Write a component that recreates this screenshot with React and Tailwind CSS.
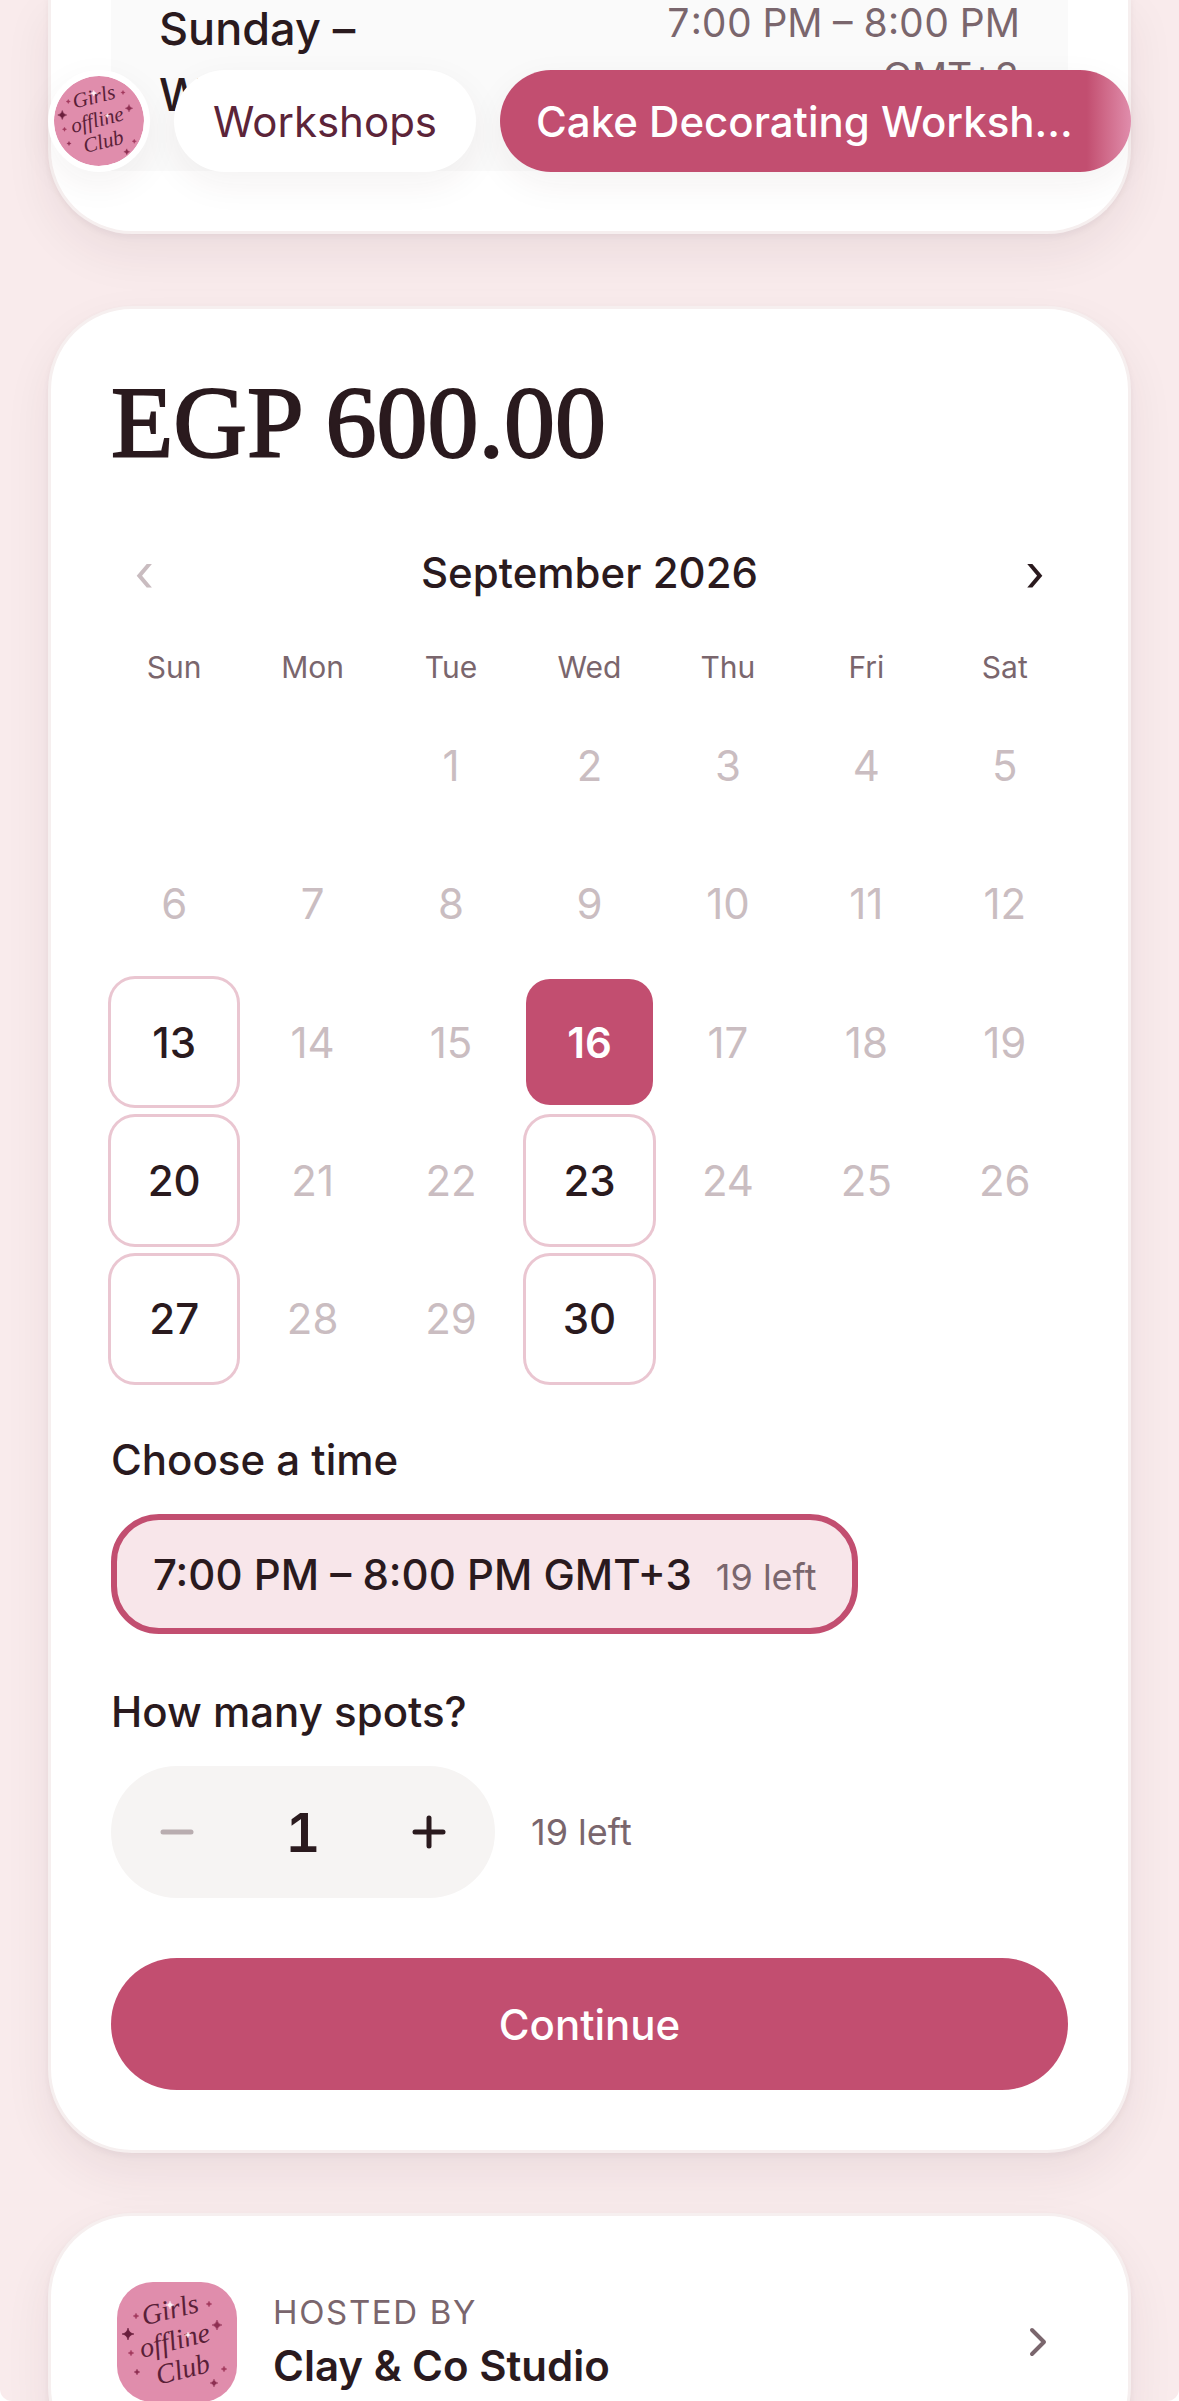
import React, { useState } from "react";
import { ChevronRight, Minus, Plus } from "lucide-react";

const WEEKDAYS = ["Sun", "Mon", "Tue", "Wed", "Thu", "Fri", "Sat"];
const OPEN_DAYS = [13, 16, 20, 23, 27, 30];
const LEADING_BLANKS = 2;
const CARD_SHADOW = "shadow-[0_3px_6px_rgba(60,25,40,0.05),0_20px_48px_rgba(60,25,40,0.07)]";

const SPARKLES = [
  [11, 52, 6, "#6a1e3c"],
  [100, 43, 5, "#8e2f52"],
  [92, 22, 3, "#a33a5e"],
  [97, 101, 4, "#8e2f52"],
  [19, 34, 3, "#a33a5e"],
  [14, 71, 3, "#a33a5e"],
  [20, 90, 3, "#8e2f52"],
  [107, 87, 3, "#a33a5e"],
  [53, 23, 4, "#fdeef4"],
  [71, 53, 3, "#fdeef4"],
];

function ClubLogo({ className }) {
  return (
    <svg viewBox="0 0 120 120" className={className} role="img" aria-label="Girls offline Club">
      <rect width="120" height="120" fill="#e08dac" />
      <g
        transform="rotate(-14 60 60)"
        fill="#5a1f38"
        fontFamily="'Liberation Serif', serif"
        fontStyle="italic"
        fontSize="28"
        textAnchor="middle"
      >
        <text x="61" y="36">Girls</text>
        <text x="58" y="67">offline</text>
        <text x="59" y="97">Club</text>
      </g>
      {SPARKLES.map(([x, y, r, color]) => (
        <path
          key={`${x}-${y}`}
          transform={`translate(${x} ${y}) scale(${r})`}
          d="M0-1Q.15-.15 1 0Q.15.15 0 1Q-.15.15-1 0Q-.15-.15 0-1Z"
          fill={color}
          stroke={color}
          strokeWidth="0.1"
        />
      ))}
    </svg>
  );
}

function TopNav() {
  return (
    <nav className="absolute inset-x-12 top-[70px] z-10 flex items-center gap-6">
      <a
        href="#home"
        className="size-[102px] shrink-0 overflow-hidden rounded-full border-6 border-white bg-white shadow-[0_12px_36px_rgba(60,40,30,0.06)]"
      >
        <ClubLogo className="size-full rounded-full" />
      </a>
      <a
        href="#workshops"
        className="flex h-[102px] shrink-0 items-center rounded-full bg-white px-[39px] text-[42px] text-[#5c2439] shadow-[0_12px_36px_rgba(60,40,30,0.06)]"
      >
        Workshops
      </a>
      <a
        href="#cake"
        aria-current="page"
        className="flex h-[102px] min-w-0 flex-1 items-center rounded-full bg-linear-to-r from-[#c24e70] from-93% to-[#e08dac] px-9 text-[42px] font-medium whitespace-nowrap text-white shadow-[0_12px_36px_rgba(60,40,30,0.06)]"
      >
        Cake Decorating Worksh…
      </a>
    </nav>
  );
}

function Calendar({ selected, onSelect }) {
  return (
    <section aria-label="Choose a date">
      <div className="mt-[63px] flex h-[66px] items-center justify-between">
        <button type="button" disabled aria-label="Previous month" className="size-[66px] text-[51px] leading-[66px] text-[#c9bcc0]">
          ‹
        </button>
        <h2 className="text-[42px] leading-[66px] font-medium">September 2026</h2>
        <button type="button" aria-label="Next month" className="size-[66px] text-[51px] leading-[66px]">
          ›
        </button>
      </div>
      <div className="mt-10 grid grid-cols-7 gap-3 text-center text-[30px] leading-[42px] text-[#7a666d]">
        {WEEKDAYS.map((day) => (
          <span key={day}>{day}</span>
        ))}
      </div>
      <div className="mt-3.5 grid grid-cols-7 gap-3 text-[42px]">
        {Array.from({ length: LEADING_BLANKS }, (_, i) => (
          <span key={`blank-${i}`} />
        ))}
        {Array.from({ length: 30 }, (_, i) => i + 1).map((day) => {
          const open = OPEN_DAYS.includes(day);
          const look = !open
            ? "text-[#cabdc1]"
            : day === selected
              ? "bg-[#c24e70] font-semibold text-white"
              : "font-medium ring-3 ring-[#eac6d1]";
          return (
            <button
              key={day}
              type="button"
              disabled={!open}
              aria-pressed={day === selected}
              onClick={() => onSelect(day)}
              className={`flex aspect-square items-center justify-center rounded-3xl ${look}`}
            >
              {day}
            </button>
          );
        })}
      </div>
    </section>
  );
}

export default function App() {
  const [selected, setSelected] = useState(16);
  const [spots, setSpots] = useState(1);

  return (
    <main className="relative h-screen overflow-hidden rounded-b-xl bg-[#f9ebec] font-['Inter',sans-serif] text-[#2a1a1e]">
      <TopNav />
      <div className="px-12">
        <section className={`rounded-b-[84px] border-3 border-t-0 border-[#f6efef] bg-white px-15 pb-15 ${CARD_SHADOW}`}>
          <div className="-mt-1 flex justify-between bg-[#fafafa] px-12 pb-[43px]">
            <p className="text-[45px] leading-[66px] font-medium">
              Sunday –<br />
              Wednesday
            </p>
            <p className="text-right text-[39px] leading-[54px] text-[#7a666d] tabular-nums">
              7:00 PM – 8:00 PM
              <br />
              GMT+3
            </p>
          </div>
        </section>

        <section className={`mt-18 rounded-[84px] border-3 border-[#f6efef] bg-white p-15 ${CARD_SHADOW}`}>
          <p className="font-['Liberation_Serif',serif] text-[102px] leading-[108px] [-webkit-text-stroke:2px_#2a1a1e]">
            EGP 600.00
          </p>
          <Calendar selected={selected} onSelect={setSelected} />

          <h3 className="mt-12 text-[42px] leading-[60px] font-medium">Choose a time</h3>
          <button
            type="button"
            aria-pressed="true"
            className="mt-6 flex h-30 items-center rounded-[48px] border-6 border-[#c24e70] bg-[#f8e6ea] px-9"
          >
            <span className="flex items-baseline gap-6">
              <span className="text-[42px] font-medium">7:00 PM – 8:00 PM GMT+3</span>
              <span className="text-[36px] text-[#7a666d]">19 left</span>
            </span>
          </button>

          <h3 className="mt-12 text-[42px] leading-[60px] font-medium">How many spots?</h3>
          <div className="mt-6 flex items-center gap-9">
            <div className="flex h-33 items-center rounded-full bg-[#f6f4f3]">
              <button
                type="button"
                aria-label="Fewer spots"
                disabled={spots === 1}
                onClick={() => setSpots(spots - 1)}
                className="flex size-33 items-center justify-center disabled:text-[#b9adb0]"
              >
                <Minus size={48} strokeWidth={2.5} />
              </button>
              <output className="w-30 text-center text-[54px] font-semibold tabular-nums">{spots}</output>
              <button
                type="button"
                aria-label="More spots"
                onClick={() => setSpots(spots + 1)}
                className="flex size-33 items-center justify-center"
              >
                <Plus size={48} strokeWidth={2.5} />
              </button>
            </div>
            <span className="text-[36px] text-[#7a666d]">19 left</span>
          </div>

          <button type="button" className="mt-15 h-33 w-full rounded-full bg-[#c24e70] text-[42px] font-medium text-white">
            Continue
          </button>
        </section>

        <a
          href="#host"
          className={`mt-15 flex items-center rounded-[84px] border-3 border-[#f6efef] bg-white p-[66px] ${CARD_SHADOW}`}
        >
          <ClubLogo className="size-30 shrink-0 rounded-[36px]" />
          <span className="ml-9 flex flex-1 flex-col">
            <span className="text-[33px] leading-[48px] tracking-wider text-[#7a666d]">HOSTED BY</span>
            <span className="text-[42px] leading-[60px] font-semibold">Clay &amp; Co Studio</span>
          </span>
          <ChevronRight size={48} strokeWidth={2} className="text-[#7a666d]" />
        </a>
      </div>
    </main>
  );
}
